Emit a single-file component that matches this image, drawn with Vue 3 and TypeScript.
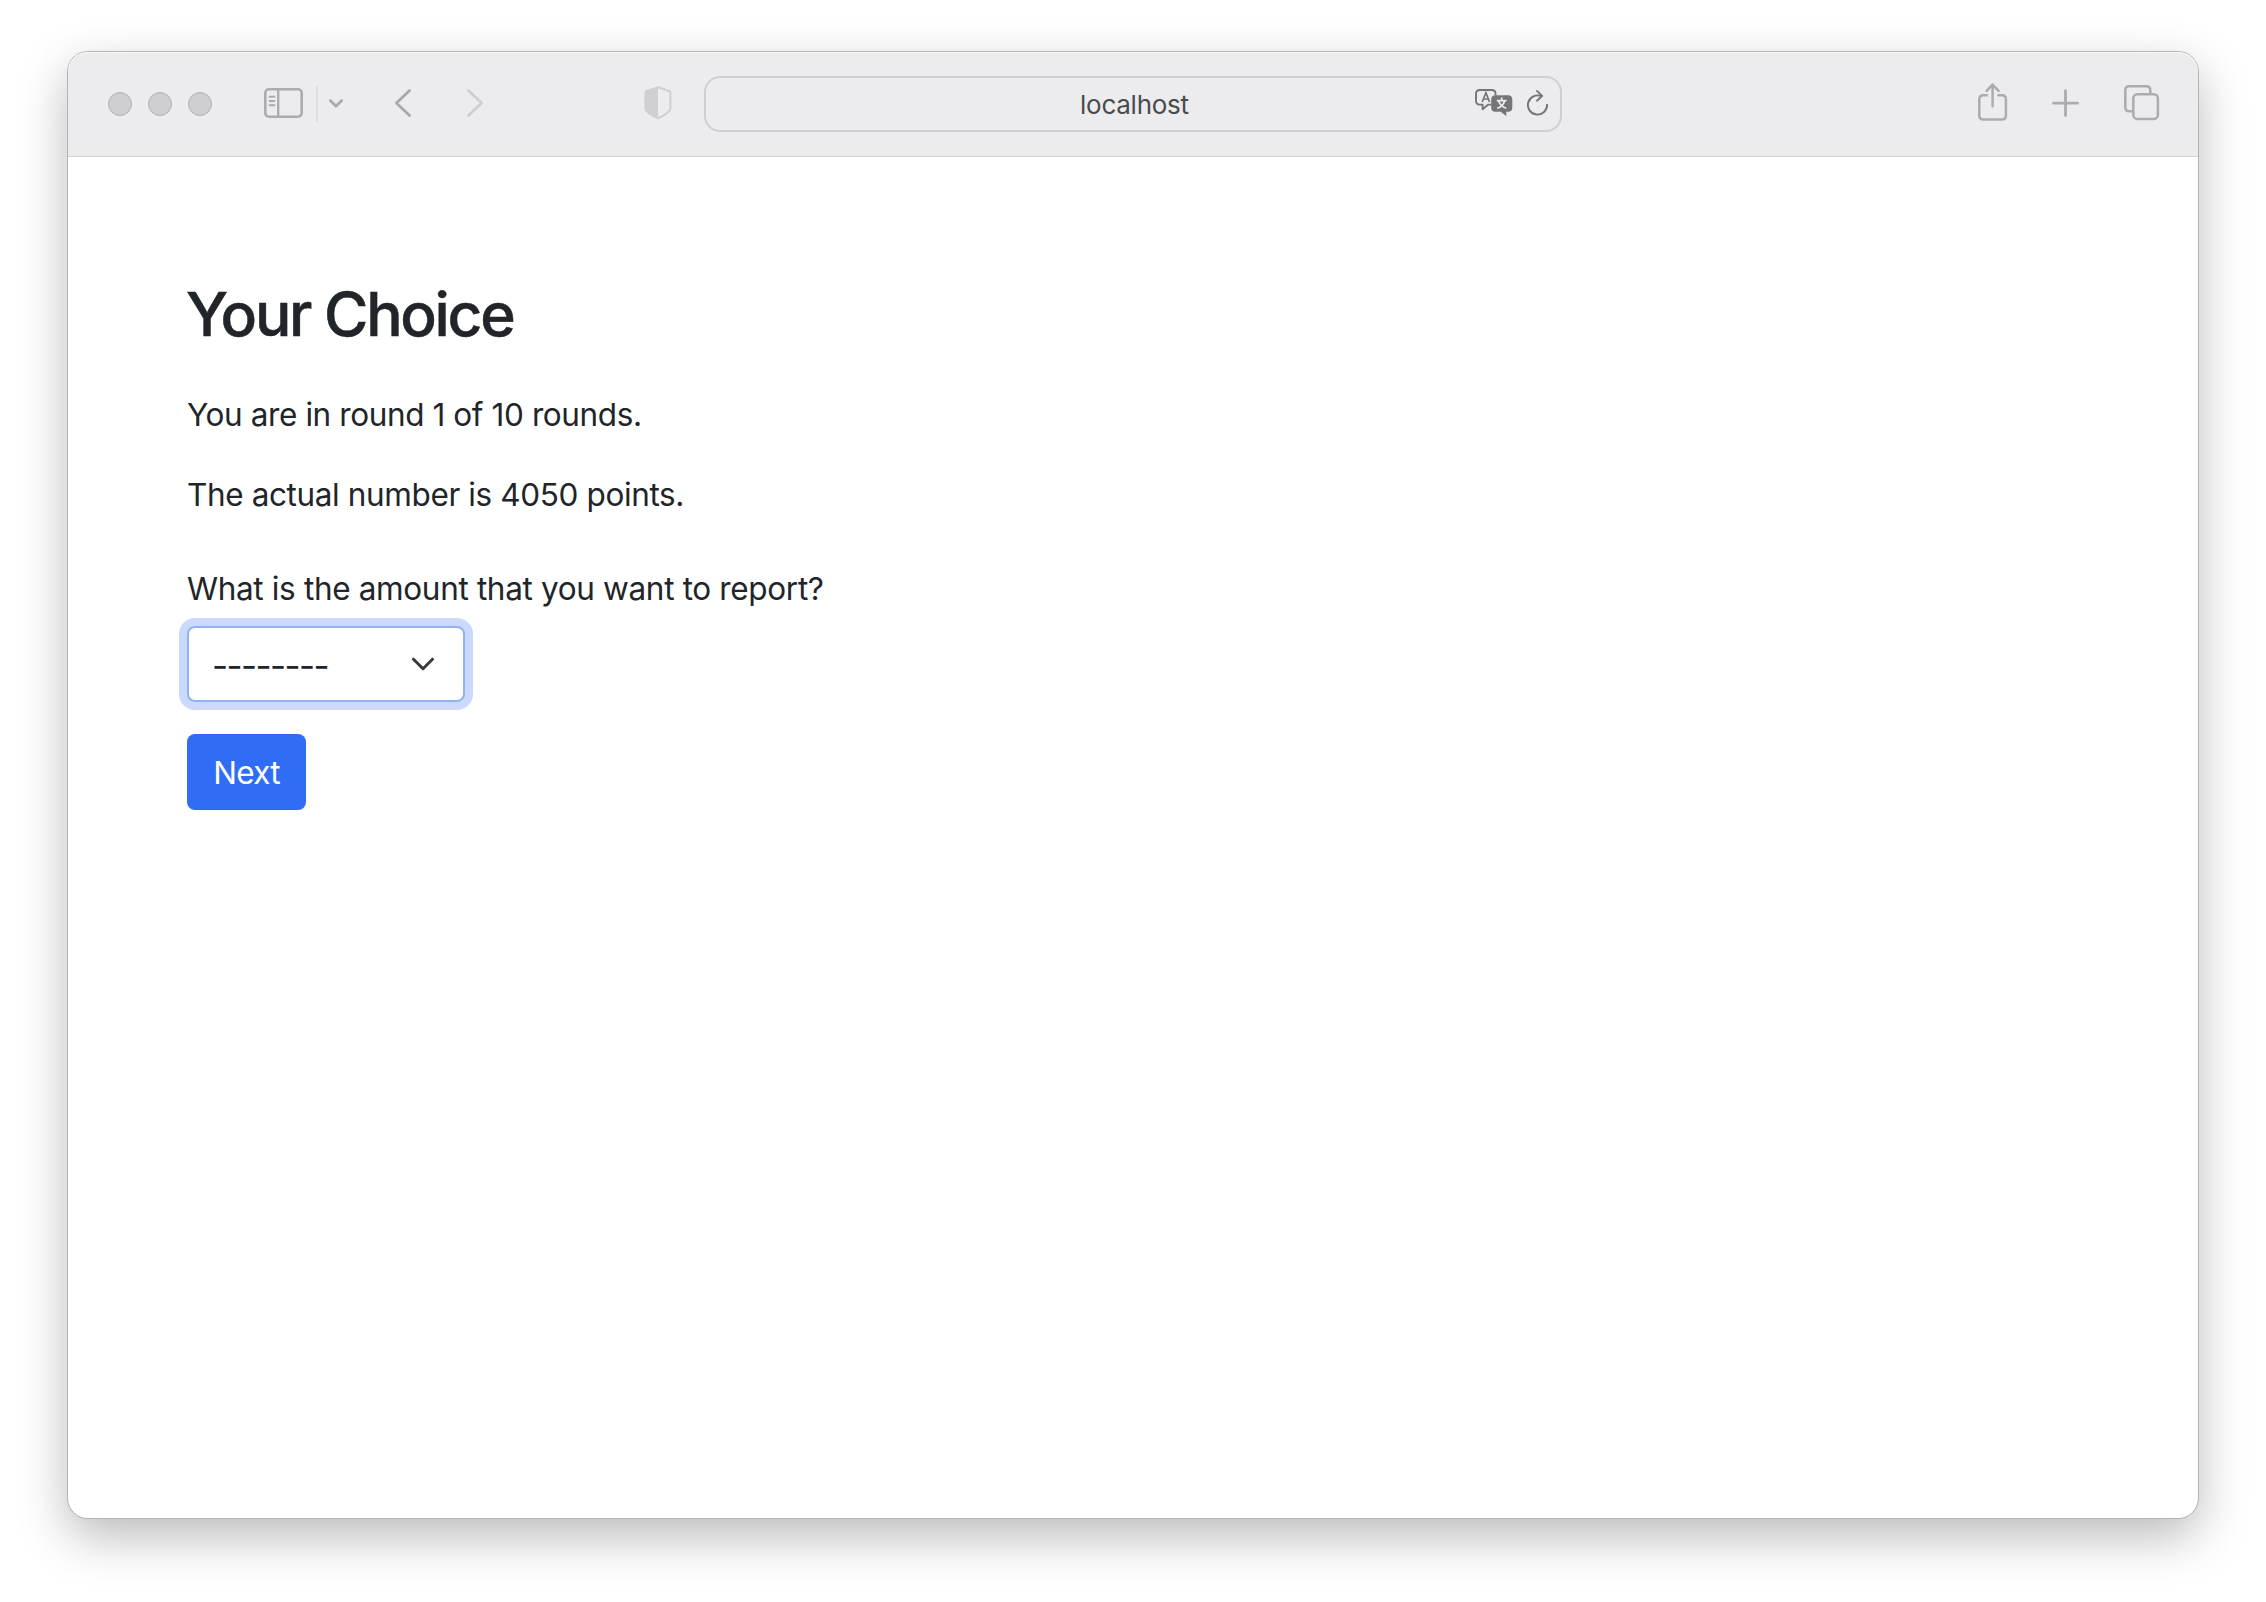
<script setup lang="ts">
import { ref } from 'vue'

const host = ref('localhost')
const round = ref(1)
const totalRounds = ref(10)
const points = ref(4050)
const lights: string[] = ['close', 'minimise', 'zoom']
</script>

<template>
  <div class="desktop">
    <div class="window">
      <header class="toolbar">
        <div class="lights">
          <span v-for="l in lights" :key="l" class="light"></span>
        </div>
        <svg class="sidebar" width="40" height="32" viewBox="0 0 40 32" fill="none" stroke="#acacae">
          <rect x="1.3" y="2.3" width="36.4" height="27.4" rx="3.6" stroke-width="2.6" />
          <path d="M14.2 2V30" stroke-width="2.4" />
          <path d="M5.6 9.7H10.4M5.6 14H10.4M5.6 18.3H10.4" stroke-width="1.9" stroke-linecap="round" />
        </svg>
        <span class="divider"></span>
        <svg class="menu" width="16" height="12" viewBox="0 0 16 12" fill="none" stroke="#acacae" stroke-width="2.8" stroke-linecap="round" stroke-linejoin="round">
          <path d="M2.3 2.5L8 8.3L13.7 2.5" />
        </svg>
        <svg class="back" width="18" height="30" viewBox="0 0 18 30" fill="none" stroke="#a9a9ab" stroke-width="2.8" stroke-linecap="round" stroke-linejoin="round">
          <path d="M15.6 2.4L2.4 15L15.6 27.6" />
        </svg>
        <svg class="forward" width="18" height="30" viewBox="0 0 18 30" fill="none" stroke="#cfcfd1" stroke-width="2.8" stroke-linecap="round" stroke-linejoin="round">
          <path d="M2.4 2.4L15.6 15L2.4 27.6" />
        </svg>
        <svg class="shield" width="28" height="34" viewBox="0 0 28 34">
          <path d="M14 1.2L26 5.2Q26.4 5.4 26.4 6V21.5Q26.4 24.5 23.6 26.6Q18.5 30.5 14 32.4Q9.5 30.5 4.2 26.6Q1.4 24.5 1.4 21.5V6Q1.4 5.4 2 5.2Z" fill="none" stroke="#d0d0d2" stroke-width="2" />
          <path d="M14 1V32.5Q9.5 30.5 4.2 26.6Q1.4 24.5 1.4 21.5V5.4Z" fill="#d0d0d2" />
        </svg>
        <div class="address">
          <span class="host">{{ host }}</span>
          <svg class="translate" width="38" height="28" viewBox="0 0 38 28" fill="none">
            <path d="M16.5 15.6H13.3L7.6 20.2V15.6H4.8Q1 15.6 1 11.8V4.8Q1 1 4.8 1H16.7Q20.5 1 20.5 4.8V6.5" stroke="#757577" stroke-width="1.9" stroke-linejoin="round" />
            <path d="M7.2 13L10.9 3.8L14.6 13M8.5 10H13.3" stroke="#757577" stroke-width="1.7" />
            <path d="M20.5 6.2H33Q37.3 6.2 37.3 10.5V18.5Q37.3 22.8 33 22.8H31.3V27.2L25.8 22.8H20.5Q16.2 22.8 16.2 18.5V10.5Q16.2 6.2 20.5 6.2Z" fill="#757577" />
            <path d="M26.7 8.6V11.3M21.8 11.6H31.6M29.6 12Q28 17.5 22.2 19.3M23.6 12Q25.5 17.5 31.3 19.3" stroke="#ececee" stroke-width="1.7" />
          </svg>
          <svg class="reload" width="22" height="28" viewBox="0 0 22 28" fill="none" stroke="#757577" stroke-width="1.9" stroke-linecap="round" stroke-linejoin="round">
            <path d="M20.1 16.6A9.6 9.6 0 1 1 14.4 8.2" />
            <path d="M10 2.9L15.2 7.9L10 12.7" />
          </svg>
        </div>
        <svg class="share" width="30" height="38" viewBox="0 0 30 38" fill="none" stroke="#acacae" stroke-width="2.5" stroke-linecap="round" stroke-linejoin="round">
          <path d="M9 12.3H5.3Q1.3 12.3 1.3 16.3V32.4Q1.3 36.4 5.3 36.4H23.9Q27.9 36.4 27.9 32.4V16.3Q27.9 12.3 23.9 12.3H20.3" />
          <path d="M14.6 23.3V1.6M8.6 7.8L14.6 1.6L20.6 7.8" />
        </svg>
        <svg class="plus" width="28" height="28" viewBox="0 0 28 28" fill="none" stroke="#acacae" stroke-width="2.8" stroke-linecap="round">
          <path d="M1.6 14.2H25.6M13.5 1.6V26.6" />
        </svg>
        <svg class="tabs" width="36" height="36" viewBox="0 0 36 36" fill="none" stroke="#acacae" stroke-width="2.5" stroke-linejoin="round">
          <path d="M8.5 26.3H5.3Q1.3 26.3 1.3 22.3V5.3Q1.3 1.3 5.3 1.3H22.3Q26.3 1.3 26.3 5.3V9" />
          <rect x="9.3" y="9.3" width="24.6" height="24.6" rx="4" />
        </svg>
      </header>
      <main class="page">
        <h2>Your Choice</h2>
        <p class="round">You are in round {{ round }} of {{ totalRounds }} rounds.</p>
        <p class="actual">The actual number is {{ points }} points.</p>
        <label class="question">What is the amount that you want to report?</label>
        <div class="select" tabindex="0">
          <span class="value">--------</span>
          <svg width="24" height="16" viewBox="0 0 24 16" fill="none" stroke="#343a40" stroke-width="3" stroke-linecap="round" stroke-linejoin="round">
            <path d="M2.5 3.2L12 12.7L21.5 3.2" />
          </svg>
        </div>
        <button class="next" type="button">Next</button>
      </main>
    </div>
  </div>
</template>

<style>
html,
body {
  margin: 0;
  background: #fff;
}
</style>

<style scoped>
.desktop {
  box-sizing: border-box;
  width: 2266px;
  height: 1602px;
  padding: 52px 68px 84px;
  overflow: hidden;
  background: #fff;
  font-family: Inter, 'Liberation Sans', sans-serif;
}
.window {
  display: flex;
  flex-direction: column;
  height: 1466px;
  border-radius: 20px;
  background: #fff;
  box-shadow: 0 0 0 1px #b4b4b5, 0 18px 50px rgba(0, 0, 0, 0.28);
}
.toolbar {
  box-sizing: border-box;
  display: flex;
  align-items: center;
  flex: none;
  height: 105px;
  border-bottom: 1px solid #d2d2d4;
  border-radius: 20px 20px 0 0;
  background: #ececee;
  box-shadow: inset 0 1px 0 #f7f7f8;
}
.toolbar svg {
  display: block;
  flex: none;
}
.lights {
  display: flex;
  gap: 16px;
  margin-left: 40px;
}
.light {
  box-sizing: border-box;
  width: 24px;
  height: 24px;
  border: 1px solid #b2b2b4;
  border-radius: 50%;
  background: #cfcfd1;
}
.sidebar {
  margin: -2px 0 0 52px;
}
.divider {
  width: 2px;
  height: 36px;
  margin-left: 12px;
  background: #dededf;
}
.menu {
  margin-left: 10px;
}
.back {
  margin: -2px 0 0 50px;
}
.forward {
  margin: -2px 0 0 54px;
}
.shield {
  margin: -2px 0 0 160px;
}
.address {
  box-sizing: border-box;
  display: flex;
  align-items: center;
  width: 858px;
  height: 56px;
  margin-left: 32px;
  border: 2px solid #cfcfd1;
  border-radius: 16px;
}
.host {
  width: 107px;
  margin: 2px 0 0 374px;
  color: #4b4b4d;
  font-size: 26px;
  letter-spacing: -0.25px;
  line-height: 32px;
  white-space: nowrap;
}
.translate {
  margin: -2px 0 0 288px;
}
.reload {
  margin: -4px 0 0 14px;
}
.share {
  margin: -5px 0 0 416px;
}
.plus {
  margin: -3px 0 0 44px;
}
.tabs {
  margin: -2px 0 0 44px;
}
.page {
  display: flex;
  flex-direction: column;
  align-items: flex-start;
  padding: 119px 119px 0;
  color: #212529;
  font-size: 31.5px;
  line-height: 48px;
}
h2 {
  margin: 0 0 0 -1px;
  font-size: 60.5px;
  font-weight: 500;
  letter-spacing: -2.25px;
  line-height: 76px;
  -webkit-text-stroke: 0.5px #212529;
}
p {
  margin: 0;
}
.round {
  margin-top: 39px;
  letter-spacing: -0.4px;
}
.actual {
  margin-top: 32px;
  letter-spacing: -0.38px;
}
.question {
  margin-top: 46px;
  letter-spacing: -0.34px;
}
.select {
  box-sizing: border-box;
  display: flex;
  align-items: center;
  justify-content: space-between;
  width: 278px;
  height: 76px;
  margin-top: 13px;
  padding: 0 28px 0 23px;
  border: 2px solid #92b3f1;
  border-radius: 8px;
  background: #fff;
  box-shadow: 0 0 0 8px #cad9fc;
  outline: none;
}
.value {
  margin-top: 2px;
  font-size: 35px;
  letter-spacing: -1.6px;
}
.next {
  width: 119px;
  height: 76px;
  margin-top: 32px;
  padding: 2px 0 0;
  border: 0;
  border-radius: 8px;
  background: #316df4;
  color: #fff;
  font: inherit;
  letter-spacing: -0.8px;
}
</style>
